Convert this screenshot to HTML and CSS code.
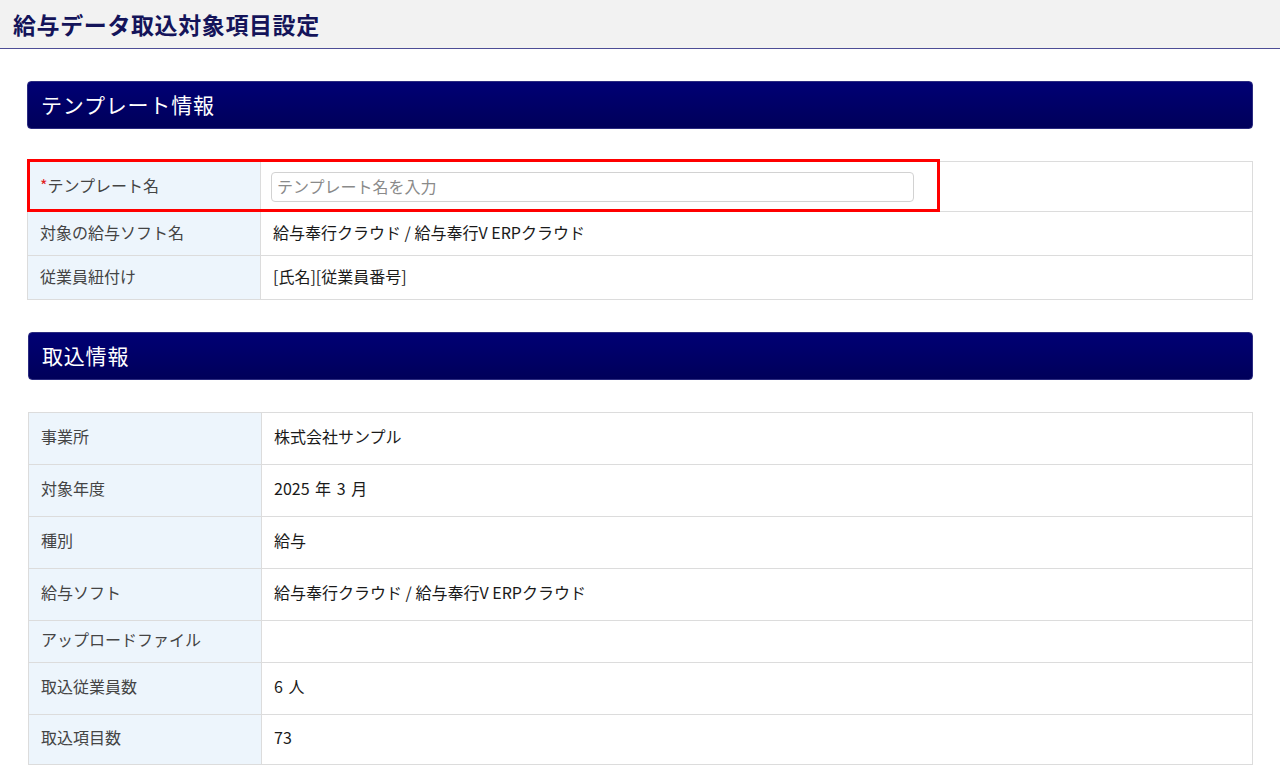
FILE: index.html
```html
<!DOCTYPE html>
<html lang="ja">
<head>
<meta charset="utf-8">
<title>給与データ取込対象項目設定</title>
<link rel="stylesheet" href="styles.css">
</head>
<body>
<header class="page-header">
  <h1 class="page-title">給与データ取込対象項目設定</h1>
</header>
<main class="content">
  <section class="section">
    <div class="section-bar">テンプレート情報</div>
    <div class="table-wrap">
      <table class="info-table">
        <tr class="row-input">
          <th class="label"><span class="req">*</span>テンプレート名</th>
          <td class="value value-input"><input class="text-input" type="text" placeholder="テンプレート名を入力"></td>
        </tr>
        <tr class="row-sm">
          <th class="label">対象の給与ソフト名</th>
          <td class="value">給与奉行クラウド / 給与奉行V ERPクラウド</td>
        </tr>
        <tr class="row-sm">
          <th class="label">従業員紐付け</th>
          <td class="value">[氏名][従業員番号]</td>
        </tr>
      </table>
      <div class="highlight"></div>
    </div>
  </section>
  <section class="section">
    <div class="section-bar section-bar-2">取込情報</div>
    <div class="table-wrap table-wrap-2">
      <table class="info-table table-2">
        <tr class="row-lg"><th class="label">事業所</th><td class="value">株式会社サンプル</td></tr>
        <tr class="row-lg"><th class="label">対象年度</th><td class="value spaced">2025 年 3 月</td></tr>
        <tr class="row-lg"><th class="label">種別</th><td class="value">給与</td></tr>
        <tr class="row-lg"><th class="label">給与ソフト</th><td class="value">給与奉行クラウド / 給与奉行V ERPクラウド</td></tr>
        <tr class="row-empty"><th class="label">アップロードファイル</th><td class="value"></td></tr>
        <tr class="row-lg"><th class="label">取込従業員数</th><td class="value spaced">6 人</td></tr>
        <tr class="row-last"><th class="label">取込項目数</th><td class="value">73</td></tr>
      </table>
    </div>
  </section>
</main>
</body>
</html>
```

FILE: styles.css
```css
* { box-sizing: border-box; }
html, body {
  margin: 0;
  padding: 0;
  background: #ffffff;
}
body {
  font-family: "Noto Sans CJK JP", "Noto Sans", sans-serif;
  color: #222;
}
.page-header {
  height: 49px;
  background: #f2f2f2;
  border-bottom: 1px solid #4d4d96;
  display: flex;
  align-items: center;
  padding-left: 13px;
}
.page-title {
  margin: 0;
  font-size: 23px;
  letter-spacing: 0.6px;
  font-weight: 700;
  color: #14145a;
  line-height: 1;
}
.content {
  padding: 32px 27px 0 27px;
}
.section {
  margin-bottom: 32px;
}
.section-bar {
  height: 48px;
  border-radius: 4px;
  border: 1px solid #2b2b80;
  background: linear-gradient(#000074, #00005a);
  color: #fff;
  font-size: 21px;
  letter-spacing: 0.8px;
  display: flex;
  align-items: center;
  padding-left: 13px;
  padding-bottom: 2px;
}
.section-bar-2 {
  margin-left: 1px;
}
.table-wrap {
  position: relative;
  margin-top: 32px;
}
.table-wrap-2 {
  margin-left: 1px;
}
.info-table {
  width: 100%;
  border-collapse: collapse;
  border: 1px solid #dcdcdc;
}
.info-table th,
.info-table td {
  border: 1px solid #dcdcdc;
  font-size: 16px;
  font-weight: 400;
  text-align: left;
  vertical-align: middle;
  line-height: 1.3;
}
.label {
  width: 233px;
  background: #edf5fc;
  color: #444;
  padding: 0 12px 2px 12px;
}
.value {
  background: #fff;
  color: #1a1a1a;
  padding: 0 12px 2px 12px;
}
.spaced {
  word-spacing: 2px;
}
.row-input th, .row-input td { height: 50px; }
.row-sm th, .row-sm td { height: 44px; }
.table-2 th, .table-2 td { padding-bottom: 4px; }
.row-lg th, .row-lg td { height: 52px; }
.row-empty th, .row-empty td { height: 42px; }
.row-last th, .row-last td { height: 50px; }
.req {
  color: #e0201c;
}
.value-input {
  padding-left: 10px;
  padding-bottom: 0;
}
.text-input {
  display: block;
  width: 643px;
  height: 30px;
  border: 1px solid #d2d2d2;
  border-radius: 4px;
  padding: 0 5px 2px 5px;
  font-family: "Noto Sans CJK JP", "Noto Sans", sans-serif;
  font-size: 16px;
  color: #333;
  background: #fff;
}
.text-input::placeholder {
  color: #8a8a8a;
}
.highlight {
  position: absolute;
  left: 0;
  top: -2px;
  width: 913px;
  height: 53px;
  border: 3px solid #ff0000;
  pointer-events: none;
}
```
